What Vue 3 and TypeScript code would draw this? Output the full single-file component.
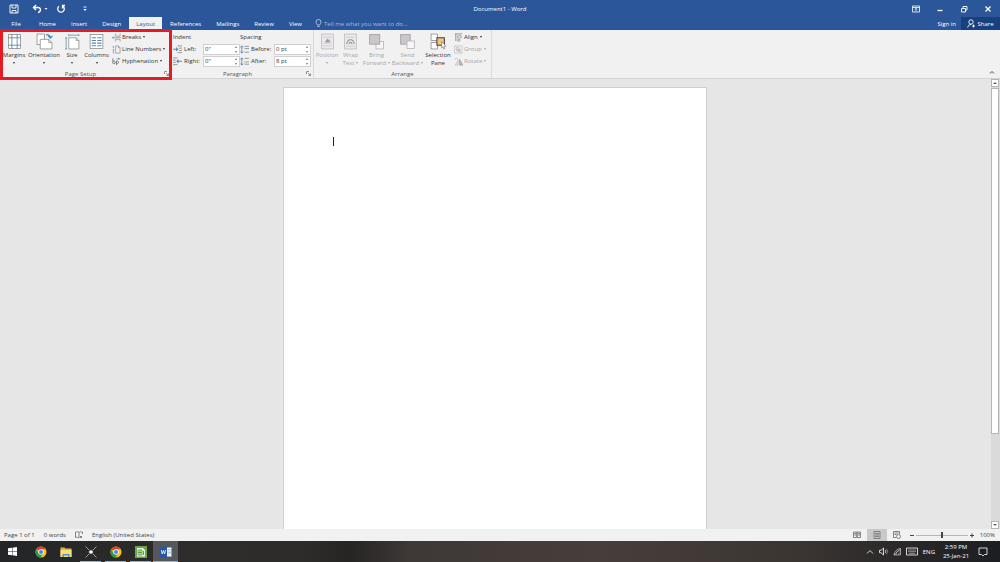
<script setup lang="ts">
import { ref } from 'vue'

interface Command { label: string; icon: string; lines?: string[]; menu?: boolean; off?: boolean; width?: number }

const tabs = ['Home', 'Insert', 'Design', 'Layout', 'References', 'Mailings', 'Review', 'View']
const activeTab = ref('Layout')
const tell = ref('')

const setup: Command[] = [
  { label: 'Margins', icon: 'margins', width: 28 },
  { label: 'Orientation', icon: 'orientation', width: 32 },
  { label: 'Size', icon: 'size', width: 24 },
  { label: 'Columns', icon: 'columns', width: 25 },
]
const setupSmall: Command[] = [
  { label: 'Breaks', icon: 'breaks' },
  { label: 'Line Numbers', icon: 'lines' },
  { label: 'Hyphenation', icon: 'hyphen' },
]
const arrange: Command[] = [
  { label: 'Position', icon: 'position', lines: ['Position'], off: true, width: 26 },
  { label: 'Wrap Text', icon: 'wrap', lines: ['Wrap', 'Text'], off: true, width: 21 },
  { label: 'Bring Forward', icon: 'forward', lines: ['Bring', 'Forward'], off: true, width: 31 },
  { label: 'Send Backward', icon: 'backward', lines: ['Send', 'Backward'], off: true, width: 31 },
  { label: 'Selection Pane', icon: 'selection', lines: ['Selection', 'Pane'], menu: false, width: 30 },
]
const arrangeSmall: Command[] = [
  { label: 'Align', icon: 'align' },
  { label: 'Group', icon: 'group', off: true },
  { label: 'Rotate', icon: 'rotate', off: true },
]
const indent = ref([
  { id: 'left', label: 'Left:', value: '0"' },
  { id: 'right', label: 'Right:', value: '0"' },
])
const spacing = ref([
  { id: 'before', label: 'Before:', value: '0 pt' },
  { id: 'after', label: 'After:', value: '8 pt' },
])
const zoom = ref(50)

const G = '#858585'
const B = '#4f89b8'
const page = (x: number, y: number, w: number, h: number) =>
  `<rect x="${x}" y="${y}" width="${w}" height="${h}" fill="#fff" stroke="${G}" stroke-width=".7"/>`
const line = (d: string, c = B, w = 0.8) => `<path d="${d}" fill="none" stroke="${c}" stroke-width="${w}"/>`

const big: Record<string, string> = {
  margins: page(2.5, 1.5, 11, 13) + line('M5.5 1v14M10.5 1v14M2 4.5h12M2 11.5h12'),
  orientation:
    page(1, 1, 7, 10) + '<path d="M4 6h8l3 3v6H4z" fill="#fff" stroke="#858585" stroke-width=".7"/>' +
    line('M12 6v3h3', G, 0.7) + line('M9.500 1.500c3 0 4 .8 4 3M11.500 2.700l2 2 2-2', B, 1.2),
  size:
    '<path d="M4.500 4.500h7l2.500 2.500v8H4.500z" fill="#fff" stroke="#858585" stroke-width=".7"/>' +
    line('M11.500 4.500V7H14', G, 0.7) + line('M4.500 2h9.500M4.500 1v2M14 1v2M2 4.500v10.500M1 4.500h2M1 15h2', B, 0.7),
  columns: page(2, 1.5, 12, 13) + line('M3.500 4.500h4M3.500 7h4M3.500 9.500h4M3.500 12h4M8.700 4.500h4M8.700 7h4M8.700 9.500h4M8.700 12h4', B, 1),
  position:
    '<rect x="2.500" y="1" width="11" height="14" fill="#ebe9eb" stroke="#b9b5b9" stroke-width=".7"/>' +
    line('M4 4h8M4 12h8M4 9.500h8', '#cdc9cd') + '<path d="M6 8.500h4V6.500L8.500 7 8 5.500z" fill="#96929a"/>',
  wrap:
    '<rect x="2.500" y="1" width="11" height="14" fill="#ebe9eb" stroke="#b9b5b9" stroke-width=".7"/>' +
    line('M4 4h8M4 12.500h8', '#cdc9cd') + line('M4.500 10.500C5 5 11 5 11.500 10.500M6.500 10.500c.5-2.500 2.500-2.500 3 0', '#96929a', 1),
  forward:
    '<rect x="7.500" y="8" width="7" height="7" fill="#f7f7f7" stroke="#b9b5b9" stroke-width=".8"/><rect x="1.500" y="1.500" width="9.500" height="9" fill="#cbc7cb"/>',
  backward:
    '<rect x="1.500" y="1.500" width="9" height="9" fill="#cbc7cb"/><rect x="7.500" y="7.500" width="7" height="7" fill="#f7f7f7" stroke="#b9b5b9" stroke-width=".8"/>',
  selection:
    page(1, 1, 6, 6) + page(1, 9, 6, 6) + '<rect x="6.500" y="4.500" width="7" height="7" fill="#f6c27c"/>' +
    '<path d="M11 8l4 4.500h-2l1 2-1 .5-1-2-1 1.200z" fill="#fff" stroke="#777" stroke-width=".6"/>',
}
const small: Record<string, string> = {
  breaks: line('M4 .5v3h5v-3M4 9.500V7h5v2.500', G, 0.7) + line('M0 5.200h10M2 3.700L.5 5.200 2 6.700', B, 0.7),
  lines: line('M4 1h3l2 2v6H4zM7 1v2h2', G, 0.7) + line('M1.500 1v2.500M1 5h1.500M1 9h1.500M1.500 5.500v2.500', B),
  hyphen: line('M1 1.500V7M1 5c.5-1 2.500-1 2.500 1S1.500 7.500 1 7M5 9V4.500M5 4.500c3-.5 3 3 0 3', '#666', 0.9) + line('M5 2h4M7.500 1v2', B),
  left: line('M5 1h5M6.500 3.500H10M6.500 6H10M5 8.500h5', G, 0.9) + line('M0 4.700h5M3.500 3l1.700 1.700L3.500 6.500', B, 1.2),
  right: line('M0 1h5M0 3.500h3M0 6h3M0 8.500h5', G, 0.9) + line('M10 4.700H4.500M6 3L4.500 4.700 6 6.500', B, 1.2),
  before: line('M5 1.500h5M5 4h5M5 8h5', G, 0.9) + line('M2 1v8M.5 2.700L2 1l1.500 1.700M.5 7.300L2 9l1.500-1.700', B, 1),
  after: line('M5 1.500h5M5 5.500h5M5 8h5', G, 0.9) + line('M2 1v8M.5 2.700L2 1l1.500 1.700M.5 7.300L2 9l1.500-1.700', B, 1),
  align: line('M1 1h8M2 1v8', '#777') + line('M4 3h4v2.500H4zM4 7h2.500v2H4z', G, 0.7),
  group: line('M.5 1h8.500v8H.5z', '#bbb', 0.7) + line('M2.500 3h3v3h-3zM4.500 5H7v2.500H4.500z', '#b0b0b0', 0.8),
  rotate: '<path d="M6 2.500v6.500h4z" fill="#b8b8b8"/>' + line('M4.500 4v5H1.500z', '#b8b8b8') + line('M1 3c.5-2 3-2 3.500 0', '#b0b0b0'),
}
const tasks = [
  { name: 'Google Chrome', icon: 'chrome', run: false },
  { name: 'File Explorer', icon: 'folder', run: false },
  { name: 'Capture', icon: 'spark', run: true },
  { name: 'Google Chrome window', icon: 'chrome', run: true },
  { name: 'Spreadsheet', icon: 'sheet', run: true },
  { name: 'Word', icon: 'word', run: true },
]
const taskIcons: Record<string, string> = {
  chrome:
    '<circle cx="6" cy="6" r="5.500" fill="#fbc116"/><path d="M6 6L1.200 3.200A5.500 5.500 0 0 1 10.800 3.300H6z" fill="#e33b2e"/>' +
    '<path d="M1.200 3.200A5.500 5.500 0 0 0 5.600 11.500L8.200 7.300 6 6 3.700 7.300z" fill="#269b4e"/><circle cx="6" cy="6" r="2.700" fill="#fff"/><circle cx="6" cy="6" r="2" fill="#4384f3"/>',
  folder: '<path d="M.5 1.500h4l1 1h6V11H.5z" fill="#e9b53b"/><path d="M.5 4h11v7H.5z" fill="#fbdc7b"/><path d="M2.500 11V8h7v3H8V9.500H4V11z" fill="#4797cf"/>',
  spark: '<path d="M.5.5l4 4M11.500.5l-4 4M.5 11.500l4-4M11.500 11.500l-4-4" stroke="#aaa" stroke-width=".9"/><path d="M6 3.700L7 5l1.500 1L7 7 6 8.300 5 7 3.500 6 5 5z" fill="#fff"/>',
  sheet: '<path d="M0 0h12v12H0z" fill="#68a64a"/><path d="M2 2h6l2 2v6.500H2z" fill="#edf6e6"/><path d="M3 4h4v5H3zM5 4v5M3 6.500h4M8.500 5v4" fill="none" stroke="#57983c" stroke-width=".9"/>',
  word: '<path d="M6 1.500h5.500v9H6z" fill="#fff" stroke="#8aa6d4" stroke-width=".5"/><path d="M7.500 3.500H11M7.500 5H11M7.500 6.500H11M7.500 8H11" stroke="#8aa6d4" stroke-width=".6"/><path d="M0 1.500L7 .3v11.400L0 10.500z" fill="#2457a5"/><path d="M1.300 4l.9 4 1.200-3.500L4.600 8l.9-4" fill="none" stroke="#fff" stroke-width=".8"/>',
}
</script>

<template>
  <div class="window">
    <header class="titlebar">
      <div class="quick">
        <button aria-label="Save"><svg width="10" height="10" viewBox="0 0 10 10"><path d="M1 1h8v8H1zM3 1v3h4V1M3 9V6.500h4V9" /></svg></button>
        <button class="undo" aria-label="Undo"><svg width="16" height="10" viewBox="0 0 16 10"><path d="M4 1L1.500 3.500 4 6M1.500 3.500H6c3.500 0 3 4.500 0 5" stroke-width="1.400" /><path d="M12.500 4h3L14 5.800z" class="solid" /></svg></button>
        <button aria-label="Repeat"><svg width="10" height="10" viewBox="0 0 10 10"><path d="M3 2.300A3.300 3.300 0 1 0 7 2.300M6.500 4.500V1.500h2.500" stroke-width="1.300" /></svg></button>
        <button class="customize" aria-label="Customize toolbar"><svg width="6" height="6" viewBox="0 0 6 6"><path d="M1.500 1h3" /><path d="M1.300 3h3.400L3 5z" class="solid" /></svg></button>
      </div>
      <h1>Document1 - Word</h1>
      <div class="controls">
        <button aria-label="Ribbon display options"><svg width="8" height="8" viewBox="0 0 8 8"><path d="M.5 1h7v6h-7zM.5 2.500h7M4 6.500v-3M2.800 4.500L4 3.300l1.200 1.200" stroke-width=".8" /></svg></button>
        <button aria-label="Minimize"><svg width="8" height="8" viewBox="0 0 8 8"><path d="M1.500 5.500h5" stroke-width="1.300" /></svg></button>
        <button aria-label="Restore"><svg width="8" height="8" viewBox="0 0 8 8"><path d="M1.500 3.500h4v3.500h-4zM3 3V1.500h4V5H6" /></svg></button>
        <button aria-label="Close"><svg width="8" height="8" viewBox="0 0 8 8"><path d="M1.500 1.500l5 5M6.500 1.500l-5 5" stroke-width="1.300" /></svg></button>
      </div>
    </header>

    <nav class="tabs">
      <button class="file">File</button>
      <button v-for="t in tabs" :key="t" class="tab" :class="{ active: t === activeTab }" @click="activeTab = t">{{ t }}</button>
      <label class="tell">
        <svg width="7" height="9" viewBox="0 0 7 9"><path d="M2.300 6C2 4.800 1 4.500 1 3a2.500 2.500 0 0 1 5 0c0 1.500-1 1.800-1.300 3zM2.300 7.500h2.400" /></svg>
        <input v-model="tell" aria-label="Tell me what you want to do" placeholder="Tell me what you want to do..." />
      </label>
      <button class="signin">Sign in</button>
      <button class="share"><svg width="8" height="9" viewBox="0 0 8 9"><circle cx="4" cy="3" r="2.200" /><path d="M.7 8.500C1 6.300 2.500 5.500 4 5.500M5 7h3M6.500 5.500v3" /></svg>Share</button>
    </nav>

    <section class="ribbon">
      <div class="group marked">
        <div class="body">
          <button v-for="c in setup" :key="c.label" class="big" :style="{ width: c.width + 'px' }">
            <svg width="17" height="17" viewBox="0 0 16 16" v-html="big[c.icon]" />
            <span>{{ c.label }}</span><i class="caret" />
          </button>
          <div class="stack">
            <button v-for="c in setupSmall" :key="c.label" class="small">
              <svg width="9" height="9" viewBox="0 0 10 10" v-html="small[c.icon]" />{{ c.label }}<i class="caret" />
            </button>
          </div>
        </div>
        <footer>Page Setup<button class="launch" aria-label="Page Setup options"><svg width="5" height="5" viewBox="0 0 5 5"><path d="M.5 3V.5H3M2 2l2.500 2.500M4.500 2.500v2h-2" /></svg></button></footer>
      </div>

      <div class="group paragraph">
        <div class="body">
          <div class="stack fields indent">
            <strong>Indent</strong>
            <div v-for="f in indent" :key="f.id" class="field">
              <svg width="9" height="9" viewBox="0 0 10 10" v-html="small[f.id]" />
              <label :for="f.id">{{ f.label }}</label>
              <span class="spin"><input :id="f.id" v-model="f.value" /><i class="up" /><i class="down" /></span>
            </div>
          </div>
          <div class="stack fields spacing">
            <strong>Spacing</strong>
            <div v-for="f in spacing" :key="f.id" class="field">
              <svg width="9" height="9" viewBox="0 0 10 10" v-html="small[f.id]" />
              <label :for="f.id">{{ f.label }}</label>
              <span class="spin"><input :id="f.id" v-model="f.value" /><i class="up" /><i class="down" /></span>
            </div>
          </div>
        </div>
        <footer>Paragraph<button class="launch" aria-label="Paragraph options"><svg width="5" height="5" viewBox="0 0 5 5"><path d="M.5 3V.5H3M2 2l2.500 2.500M4.500 2.500v2h-2" /></svg></button></footer>
      </div>

      <div class="group arrange">
        <div class="body">
          <button v-for="c in arrange" :key="c.label" class="big" :disabled="c.off" :style="{ width: c.width + 'px' }">
            <svg width="17" height="17" viewBox="0 0 16 16" v-html="big[c.icon]" />
            <span>{{ c.lines?.[0] }}</span>
            <span v-if="c.lines?.[1]">{{ c.lines[1] }}<i v-if="c.menu !== false" class="caret" /></span>
            <i v-else class="caret" />
          </button>
          <div class="stack">
            <button v-for="c in arrangeSmall" :key="c.label" class="small" :disabled="c.off">
              <svg width="9" height="9" viewBox="0 0 10 10" v-html="small[c.icon]" />{{ c.label }}<i class="caret" />
            </button>
          </div>
        </div>
        <footer>Arrange</footer>
      </div>
      <button class="collapse" aria-label="Collapse the ribbon"><svg width="6" height="5" viewBox="0 0 6 5"><path d="M1 3.500l2-2 2 2" /></svg></button>
    </section>

    <main class="workspace">
      <div class="canvas">
        <article class="paper" contenteditable="true" role="textbox" aria-label="Document"><span class="cursor" /></article>
      </div>
      <div class="scroll">
        <button aria-label="Scroll up"><i class="tri up" /></button>
        <div class="track"><div class="thumb" /></div>
        <button aria-label="Scroll down"><i class="tri down" /></button>
      </div>
    </main>

    <div class="status">
      <span>Page 1 of 1</span><span>0 words</span>
      <svg width="8" height="8" viewBox="0 0 8 8"><path d="M4 1.500C3 .7 2 .7.500 1v5.500c1.500-.3 2.500-.3 3.500.5M4 1.500v5.500M4 1.500C5 .7 6 .7 7.500 1v2M5 5l2 2M7 5L5 7" /></svg>
      <span>English (United States)</span>
      <div class="views">
        <button aria-label="Read mode"><svg width="8" height="8" viewBox="0 0 8 8"><path d="M.5 1h3.300v5.500H.5zM4.200 1h3.300v5.500H4.200zM1.200 2.500h2M1.200 4h2M5 2.500h2M5 4h2" /></svg></button>
        <button class="on" aria-label="Print layout"><svg width="8" height="8" viewBox="0 0 8 8"><path d="M1 .5h6v7H1zM2 2.500h4M2 4h4M2 5.500h4" /></svg></button>
        <button aria-label="Web layout"><svg width="8" height="8" viewBox="0 0 8 8"><path d="M6.500 3V.5h-6v6H3M1.500 2h4M1.500 3.500h2" /><circle cx="5.500" cy="5.500" r="2" /></svg></button>
      </div>
      <div class="zoom">
        <button aria-label="Zoom out"><svg width="6" height="6" viewBox="0 0 6 6"><path d="M1 3.500h4" /></svg></button>
        <input v-model="zoom" type="range" aria-label="Zoom" />
        <button aria-label="Zoom in"><svg width="6" height="6" viewBox="0 0 6 6"><path d="M1 3.500h4M3 1.500v4" /></svg></button>
        <span>100%</span>
      </div>
    </div>

    <div class="taskbar">
      <button class="start" aria-label="Start"><svg width="9" height="9" viewBox="0 0 10 10"><path d="M0 1.500L4.500.8v4H0zM5 .7l5-.7v4.800H5zM0 5.300h4.500v4L0 8.600zM5 5.300h5V10l-5-.7z" fill="#fff" /></svg></button>
      <button v-for="t in tasks" :key="t.name" class="task" :class="{ run: t.run, current: t.icon === 'word' }" :aria-label="t.name">
        <svg width="12" height="12" viewBox="0 0 12 12" v-html="taskIcons[t.icon]" />
      </button>
      <div class="tray">
        <svg width="8" height="8" viewBox="0 0 8 8"><path d="M1 5.500l3-3 3 3" /></svg>
        <svg width="9" height="9" viewBox="0 0 9 9"><path d="M.5 3.300h1.500L4.500 1v7L2 5.700H.5z" /><path d="M6 3c1 1 1 2 0 3" /><path d="M7.300 1.800c1.500 1.800 1.500 3.600 0 5.400" opacity=".5" /></svg>
        <svg width="8" height="9" viewBox="0 0 8 9"><path d="M1 8A7 7 0 0 1 7.500 1.500M3 8A4.500 4.500 0 0 1 7.500 3.700M5 8A2.500 2.500 0 0 1 7.500 6M.8 8L7.500 1.300V8z" opacity=".6" /></svg>
        <svg width="12" height="9" viewBox="0 0 12 9"><path d="M.5 1h11v7H.5z" /><path d="M2 3h8M2 4.700h8M3 6.400h6" opacity=".6" /></svg>
        <span>ENG</span>
        <time>2:59 PM<br />25-Jan-21</time>
        <svg width="10" height="10" viewBox="0 0 10 10"><path d="M1 1h8v6.500H6.500L5 9 3.500 7.500H1z" /></svg>
      </div>
    </div>
  </div>
</template>

<style>
body { margin: 0; }
</style>

<style scoped>
.window { display: flex; flex-direction: column; height: 100vh; overflow: hidden; background: #e6e6e6; color: #333; font: 6px/8px "Open Sans", "Noto Sans", sans-serif; }
button, input { font: inherit; color: inherit; background: none; border: 0; padding: 0; margin: 0; min-width: 0; outline: 0; }
button { display: flex; align-items: center; justify-content: center; white-space: nowrap; }
svg { flex: none; fill: none; stroke: currentColor; stroke-width: 0.9; }
.solid { fill: currentColor; stroke: none; }
.titlebar { display: grid; grid-template-columns: 1fr auto 1fr; align-items: center; flex: none; height: 17px; background: #2b579a; color: #fff; }
.quick { display: flex; align-items: center; padding-left: 9px; gap: 13px; }
.undo { margin-right: -5px; }
.customize { margin-left: 3px; }
h1 { margin: 0; font: inherit; }
.controls { display: flex; justify-content: flex-end; gap: 16px; padding-right: 8px; }
.tabs { display: flex; align-items: stretch; flex: none; height: 13px; background: #2b579a; color: #fff; }
.file { width: 32px; }
.tab { padding: 0 7px; margin-right: 1px; }
.tab.active { background: #f1f1f1; color: #2b579a; }
.tell { display: flex; align-items: center; flex: 1; gap: 2px; padding-left: 5px; color: #b3c4df; }
.tell input { width: 120px; }
.tell input::placeholder { color: #a5b9d8; opacity: 1; }
.signin { padding: 0 5px; }
.share { width: 39px; gap: 2px; background: #17407c; }
.ribbon { display: flex; flex: none; position: relative; background: #f1f1f1; border-bottom: 1px solid #d2d2d2; }
.group { display: flex; flex-direction: column; position: relative; border-right: 1px solid #dadada; }
.body { display: flex; height: 38px; padding-top: 1px; }
.group footer { display: flex; justify-content: center; align-items: center; height: 9px; color: #555; position: relative; }
.launch { position: absolute; right: 2px; top: 2px; color: #888; }
.marked { width: 171px; }
.marked footer { padding-right: 10px; }
.marked::after { content: ""; position: absolute; inset: -1px -1px -2px 0; border: 3px solid #e31b23; pointer-events: none; z-index: 1; }
.big { display: flex; flex-direction: column; justify-content: flex-start; padding-top: 2px; }
.big > svg { margin-bottom: 1px; }
.big span { display: flex; align-items: center; gap: 2px; }
.big > .caret { margin-top: 3px; }
button:disabled { color: #a9a5a9; }
.caret { flex: none; width: 0; height: 0; border: 1px solid transparent; border-top: 2px solid currentColor; border-bottom: 0; }
.stack { display: flex; flex-direction: column; padding-left: 3px; }
.small { height: 12px; gap: 2px; justify-content: flex-start; }
.small svg { margin-right: -1px; }
.paragraph { width: 141px; }
.paragraph footer { padding-right: 10px; }
.fields { padding-left: 1px; }
.fields strong { height: 12px; line-height: 13px; font-weight: 400; }
.field { display: flex; align-items: center; height: 12px; gap: 2px; }
.field label { width: 17px; }
.spacing .field label { width: 21px; }
.spacing { padding-left: 0; }
.spin { position: relative; display: flex; width: 37px; height: 11px; border: 1px solid #d0d0d0; background: #fff; box-sizing: border-box; }
.spin input { width: 24px; padding-left: 1px; }
.spin i, .tri { width: 0; height: 0; border: 1px solid transparent; }
.spin i { position: absolute; right: 2px; }
.spin .up { top: 1px; border-bottom: 2px solid #777; border-top: 0; }
.spin .down { bottom: 1px; border-top: 2px solid #777; border-bottom: 0; }
.arrange { width: 177px; }
.arrange .stack { padding-left: 1px; }
.collapse { margin: auto 5px 3px auto; }
.workspace { display: flex; flex: 1; min-height: 0; }
.canvas { flex: 1; overflow: hidden; display: flex; justify-content: center; padding-top: 8px; }
.paper { width: 424px; box-sizing: border-box; padding: 49px; background: #fff; border: 1px solid #cfcfcf; border-bottom: 0; outline: 0; }
.cursor { display: block; width: 1px; height: 9px; background: #222; }
.scroll { display: flex; flex-direction: column; width: 9px; border-left: 1px solid #e6e6e6; background: #dadada; }
.scroll button { height: 8px; margin-right: 1px; border: 1px solid #b5b5b5; background: #fff; }
.tri.up { border-width: 0 2px 2px; border-bottom-color: #666; }
.tri.down { border-width: 2px 2px 0; border-top-color: #666; }
.track { flex: 1; padding: 1px 1px 0 0; }
.thumb { height: 80%; box-sizing: border-box; background: #fff; border: 1px solid #b5b5b5; }
.status { display: flex; align-items: center; flex: none; height: 12px; gap: 9px; padding: 0 5px 0 4px; background: #f1f1f1; color: #444; }
.status svg { color: #777; }
.views { display: flex; margin-left: auto; height: 12px; }
.views button { width: 20px; }
.views .on { background: #c9c9c9; }
.zoom { display: flex; align-items: center; gap: 1px; margin-left: -7px; }
.zoom svg { color: #333; }
.zoom input { appearance: none; width: 52px; height: 8px; background: linear-gradient(#b5b5b5, #b5b5b5) center / 100% 1px no-repeat; }
.zoom input::-webkit-slider-thumb { appearance: none; width: 2px; height: 6px; background: #444; }
.zoom span { margin-left: 4px; }
.taskbar { display: flex; flex: none; height: 21px; background: linear-gradient(90deg, #232527, #2f2d2b 20%, #2d2c2a 30%, #262524 35%, #3e3836 41%, #463e3a 60%, #3b3532 80%, #2a2829 90%, #1c1e22); color: #fff; }
.taskbar svg { stroke-width: 0.8; }
.start { width: 25px; margin-right: 3px; }
.taskbar button svg { stroke: none; }
.task { width: 25px; box-sizing: border-box; padding-top: 1px; }
.task.run { background: linear-gradient(#76b9ed, #76b9ed) bottom / 21px 1px no-repeat; }
.task.current { background: linear-gradient(#76b9ed, #76b9ed) bottom / 100% 1px no-repeat #54585c; }
.tray { display: flex; align-items: center; margin-left: auto; gap: 5px; padding-right: 12px; }
time { width: 28px; text-align: center; line-height: 9px; margin: 0 3px 0 2px; }
</style>
